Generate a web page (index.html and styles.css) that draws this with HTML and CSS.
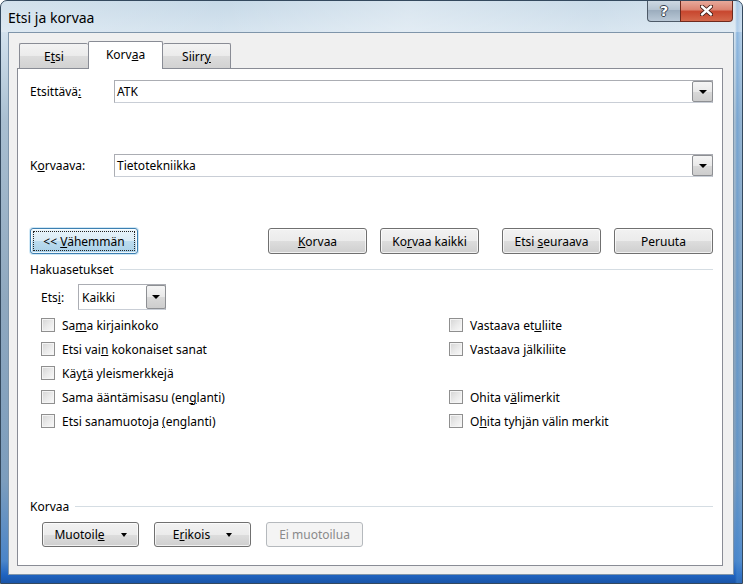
FILE: index.html
```html
<!DOCTYPE html>
<html lang="fi">
<head>
<meta charset="UTF-8">
<title>Etsi ja korvaa</title>
<link rel="stylesheet" href="styles.css">
</head>
<body>
  <div class="window">
    <div class="titlebar">
      <span class="title">Etsi ja korvaa</span>
      <div class="caption">
        <div class="cbtn help"><span>?</span></div>
        <div class="cbtn close">
          <svg width="13" height="11" viewBox="0 0 13 11">
            <path d="M2 1.5 L11 9.5 M11 1.5 L2 9.5" stroke="#3d1a14" stroke-width="4.2" stroke-linecap="round"/>
            <path d="M2 1.5 L11 9.5 M11 1.5 L2 9.5" stroke="#ffffff" stroke-width="2.4" stroke-linecap="round"/>
          </svg>
        </div>
      </div>
    </div>

    <div class="client">
      <div class="tabs">
        <div class="tab tab-etsi"><span>E<u>t</u>si</span></div>
        <div class="tab tab-korvaa active"><span>Korv<u>a</u>a</span></div>
        <div class="tab tab-siirry"><span>Siirr<u>y</u></span></div>
      </div>

      <div class="panel">
        <div class="field">
          <label class="field-label">Etsittävä<u>:</u></label>
          <div class="combo">
            <span class="combo-val">ATK</span>
            <span class="drop"><i class="arrow"></i></span>
          </div>
        </div>

        <div class="field field-second">
          <label class="field-label">K<u>o</u>rvaava:</label>
          <div class="combo">
            <span class="combo-val">Tietotekniikka</span>
            <span class="drop"><i class="arrow"></i></span>
          </div>
        </div>

        <div class="actions">
          <button class="btn btn-less"><span class="focus"><span>&lt;&lt; <u>V</u>ähemmän</span></span></button>
          <div class="actions-right">
            <button class="btn"><span><u>K</u>orvaa</span></button>
            <button class="btn"><span>Ko<u>r</u>vaa kaikki</span></button>
            <button class="btn btn-wide-gap"><span>Etsi <u>s</u>euraava</span></button>
            <button class="btn"><span>Peruuta</span></button>
          </div>
        </div>

        <div class="group-title group-search"><span>Hakuasetukset</span><i class="rule"></i></div>

        <div class="search-in">
          <span class="search-label">Ets<u>i</u>:</span>
          <div class="select">
            <span class="combo-val">Kaikki</span>
            <span class="drop"><i class="arrow"></i></span>
          </div>
        </div>

        <div class="options">
          <div class="opt"><i class="check"></i><span>Sa<u>m</u>a kirjainkoko</span></div>
          <div class="opt"><i class="check"></i><span>Vastaava et<u>u</u>liite</span></div>
          <div class="opt"><i class="check"></i><span>Etsi vai<u>n</u> kokonaiset sanat</span></div>
          <div class="opt"><i class="check"></i><span>Vastaava <u>j</u>älkiliite</span></div>
          <div class="opt"><i class="check"></i><span>Käy<u>t</u>ä yleismerkkejä</span></div>
          <div class="opt"></div>
          <div class="opt"><i class="check"></i><span>Sama ääntämisasu (en<u>g</u>lanti)</span></div>
          <div class="opt"><i class="check"></i><span>Ohita v<u>ä</u>limerkit</span></div>
          <div class="opt"><i class="check"></i><span>Etsi sanamuotoja <u>(</u>englanti)</span></div>
          <div class="opt"><i class="check"></i><span>O<u>h</u>ita tyhjän välin merkit</span></div>
        </div>

        <div class="group-title group-replace"><span>Korvaa</span><i class="rule"></i></div>

        <div class="format-row">
          <button class="btn btn-menu"><span>Muotoil<u>e</u></span><i class="arrow"></i></button>
          <button class="btn btn-menu"><span>E<u>r</u>ikois</span><i class="arrow"></i></button>
          <button class="btn btn-disabled"><span>Ei muotoilua</span></button>
        </div>
      </div>
    </div>
  </div>
</body>
</html>
```

FILE: styles.css
```css
* {
  box-sizing: border-box;
}
body {
  margin: 0;
  width: 743px;
  height: 584px;
  overflow: hidden;
  font-family: 'Noto Sans', sans-serif;
  font-size: 12px;
  color: #000;
  background: #fff;
}
u {
  text-decoration-thickness: 1px;
  text-underline-offset: 1px;
}

/* window frame */
.window {
  width: 743px;
  height: 584px;
  display: flex;
  flex-direction: column;
  border: 1px solid #34495e;
  border-radius: 7px 7px 0 0;
  background:
    linear-gradient(to right, rgba(255,255,255,0) 0, rgba(255,255,255,0) 734px, rgba(70,140,210,0.5) 736px, rgba(140,180,220,0.2) 742px),
    linear-gradient(to bottom, #c4d7e6 0, #d3e2ee 30px, #a9bfd1 120px, #8fa8bf 300px, #7c9dbd 480px, #4b85c9 560px, #1f63c0 574px, #1a55a8 100%);
  overflow: hidden;
}
.titlebar {
  height: 31px;
  display: flex;
  justify-content: space-between;
  align-items: flex-start;
  background: linear-gradient(100deg, rgba(255,255,255,0.25) 0, rgba(255,255,255,0.05) 30%, rgba(255,255,255,0.35) 55%, rgba(255,255,255,0.1) 80%, rgba(255,255,255,0.3) 100%);
}
.title {
  padding: 8px 0 0 7px;
  font-size: 14px;
  line-height: 18px;
}
.caption {
  display: flex;
  margin: -1px 9px 0 0;
}
.cbtn {
  height: 22px;
  display: flex;
  align-items: center;
  justify-content: center;
  border: 1px solid #4d5a68;
  border-top: none;
}
.help {
  width: 33px;
  border-radius: 0 0 0 4px;
  border-right: none;
  background: linear-gradient(to bottom, #cfdae4 0, #b3c2d0 50%, #9cadbe 50%, #b9c8d6 100%);
}
.help span {
  font-family: 'DejaVu Sans', sans-serif;
  font-weight: bold;
  font-size: 14px;
  line-height: 14px;
  color: #ffffff;
  text-shadow: 1px 0 0 #35414e, -1px 0 0 #35414e, 0 1px 0 #35414e, 0 -1px 0 #35414e;
}
.close {
  width: 53px;
  border-color: #6e2a1e;
  border-radius: 0 0 4px 0;
  background: linear-gradient(to bottom, #e9ad9f 0, #dc8573 45%, #c8472f 55%, #d4694c 100%);
}

/* client area */
.client {
  flex: 1;
  margin: 0 8px 8px 7px;
  padding: 8px 10px 8px 8px;
  background: #f0f0f0;
  border: 1px solid #7f95aa;
  display: flex;
  flex-direction: column;
}
.tabs {
  height: 27px;
  display: flex;
  align-items: flex-end;
  padding-left: 2px;
  position: relative;
  z-index: 1;
}
.tab {
  height: 25px;
  display: flex;
  align-items: center;
  justify-content: center;
  border: 1px solid #898c95;
  border-bottom: none;
  background: linear-gradient(to bottom, #f3f3f3 0, #ebebeb 50%, #dcdcdc 51%, #d2d2d2 100%);
  border-radius: 2px 2px 0 0;
}
.tab-etsi {
  width: 69px;
  border-right: none;
}
.tab-korvaa {
  width: 75px;
}
.tab-siirry {
  width: 68px;
  border-left: none;
}
.tab.active {
  height: 28px;
  margin-bottom: -1px;
  background: #fff;
  padding-bottom: 3px;
}
.panel {
  flex: 1;
  background: #fff;
  border: 1px solid #898c95;
  padding: 11px 9px 0 12px;
}

/* find / replace fields */
.field {
  display: flex;
  align-items: center;
}
.field-second {
  margin-top: 51px;
}
.field-label {
  width: 84px;
}
.combo, .select {
  display: flex;
  align-items: center;
  height: 23px;
  border: 1px solid #abadb3;
  border-bottom-color: #c9ced6;
  background: #fff;
}
.combo {
  flex: 1;
}
.combo-val {
  flex: 1;
  padding-left: 2px;
}
.drop {
  width: 21px;
  height: 21px;
  margin-right: -1px;
  border: 1px solid #8d8f93;
  border-radius: 2px;
  background: linear-gradient(to bottom, #f5f5f5 0, #e9e9e9 50%, #d9d9d9 51%, #cdcdcd 100%);
  display: flex;
  align-items: center;
  justify-content: center;
}
.arrow {
  width: 0;
  height: 0;
  border-left: 4px solid transparent;
  border-right: 4px solid transparent;
  border-top: 4px solid #000;
}

/* buttons */
.actions {
  display: flex;
  margin-top: 51px;
}
.actions-right {
  margin-left: auto;
  display: flex;
  gap: 13px;
}
.btn {
  height: 26px;
  width: 99px;
  padding: 0;
  font: inherit;
  color: #000;
  border: 1px solid #707070;
  border-radius: 3px;
  background: linear-gradient(to bottom, #f2f2f2 0, #ebebeb 50%, #dddddd 51%, #cfcfcf 100%);
  box-shadow: inset 0 0 0 1px rgba(255,255,255,0.7);
  display: flex;
  align-items: center;
  justify-content: center;
}
.btn-wide-gap {
  margin-left: 10px;
}
.btn-less {
  width: 108px;
  border-color: #3c7fb1;
  background: linear-gradient(to bottom, #e9f4fa 0, #d9ebf6 50%, #bcdcef 51%, #a9d0e8 100%);
  box-shadow: inset 0 0 0 1px rgba(255,255,255,0.8), 0 0 0 1px rgba(120,190,230,0.35);
  padding: 2px;
}
.focus {
  flex: 1;
  align-self: stretch;
  display: flex;
  align-items: center;
  justify-content: center;
  border: 1px dotted #222;
}

/* group titles */
.group-title {
  display: flex;
  align-items: center;
  height: 16px;
}
.group-title .rule {
  flex: 1;
  margin-left: 6px;
  border-top: 1px solid #d5dde3;
}
.group-search {
  margin-top: 7px;
}
.group-replace {
  margin-top: 65px;
}

.search-in {
  display: flex;
  align-items: center;
  margin-top: 7px;
  padding-left: 11px;
}
.search-label {
  width: 37px;
}
.select {
  width: 88px;
  height: 26px;
}
.select .combo-val {
  padding-left: 3px;
}
.select .drop {
  height: 24px;
  width: 20px;
}

/* checkboxes */
.options {
  display: grid;
  grid-template-columns: 408px auto;
  grid-auto-rows: 24px;
  margin-top: 3px;
  padding-left: 11px;
}
.opt {
  display: flex;
  align-items: center;
}
.check {
  width: 14px;
  height: 14px;
  margin-right: 7px;
  border: 1px solid #8f8f8f;
  background: linear-gradient(135deg, #d4d4d4 0, #e9e9e9 50%, #fafafa 100%);
  box-shadow: inset 0 0 0 1px #f4f4f4;
}

/* replace formatting */
.format-row {
  display: flex;
  margin-top: 8px;
  padding-left: 12px;
}
.format-row .btn {
  height: 25px;
  width: 97px;
  margin-right: 15px;
}
.btn-menu .arrow {
  margin-left: 16px;
  border-left-width: 3.5px;
  border-right-width: 3.5px;
}
.btn-disabled {
  color: #8a8a8a;
  border-color: #b5b9bd !important;
  background: #f4f4f4 !important;
  box-shadow: none !important;
}
```
